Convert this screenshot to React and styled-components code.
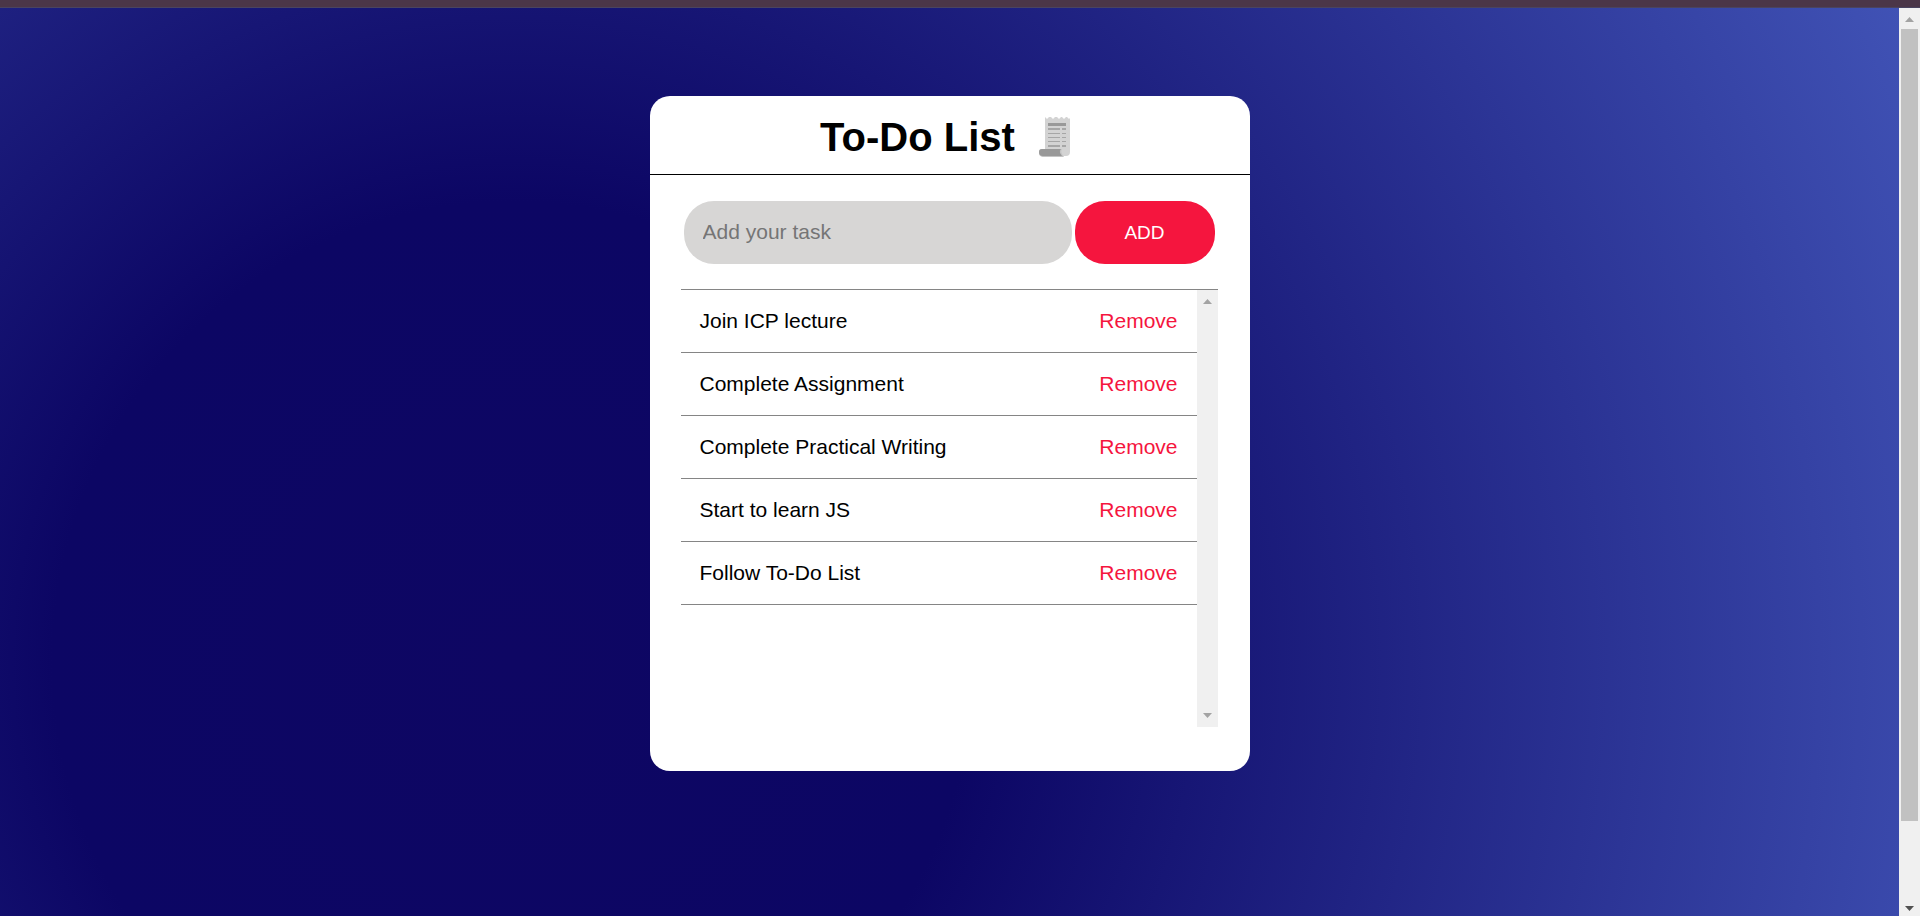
import React, { useState } from "react";
import styled, { createGlobalStyle } from "styled-components";

const GlobalStyle = createGlobalStyle`
  * { box-sizing: border-box; }
  body {
    margin: 0;
    font-family: Arial, "Liberation Sans", sans-serif;
  }
`;

const Window = styled.div`
  display: flex;
  flex-direction: column;
  height: 100vh;
  overflow: hidden;
`;

const TopStrip = styled.div`
  flex: none;
  height: 8px;
  background: #4b3648;
  border-bottom: 1px solid #4a4460;
`;

const Viewport = styled.div`
  flex: 1;
  display: flex;
  min-height: 0;
`;

const Page = styled.main`
  flex: 1;
  min-width: 0;
  display: flex;
  flex-direction: column;
  align-items: center;
  padding: 88px 20px 0;
  overflow: hidden;
  background: radial-gradient(circle at 27% 72%, #0e0663 0%, #0c0664 30%, #4052b5 100%);
`;

const Card = styled.section`
  width: 100%;
  max-width: 600px;
  padding-bottom: 44px;
  border-radius: 20px;
  background: #fff;
`;

const Header = styled.header`
  display: flex;
  justify-content: center;
  align-items: center;
  gap: 24px;
  height: 79px;
  padding: 4px 9px 0 0;
  border-bottom: 1px solid #000;
`;

const Title = styled.h1`
  margin: 0;
  font-size: 40px;
  line-height: 46px;
  font-weight: 700;
  color: #000;
`;

const ReceiptIcon = styled.svg`
  width: 31px;
  height: 40px;
`;

const Form = styled.form`
  display: flex;
  gap: 3px;
  padding: 26px 35px 25px 34px;
`;

const TaskInput = styled.input`
  flex: 1;
  min-width: 0;
  height: 63px;
  padding: 0 19px 2px;
  border: 0;
  border-radius: 30px;
  outline: none;
  background: #d7d6d5;
  font-family: inherit;
  font-size: 21px;
  color: #000;
  &::placeholder { color: #757575; opacity: 1; }
`;

const AddButton = styled.button`
  width: 140px;
  height: 63px;
  padding: 0;
  border: 0;
  border-radius: 30px;
  background: #f5153e;
  color: #fff;
  font-family: inherit;
  font-size: 19px;
  cursor: pointer;
`;

const ListPanel = styled.div`
  display: flex;
  height: 438px;
  margin: 0 32px 0 31px;
  border-top: 1px solid #858585;
`;

const TaskList = styled.ul`
  flex: 1;
  margin: 0;
  padding: 0;
  list-style: none;
`;

const TaskRow = styled.li`
  display: flex;
  justify-content: space-between;
  align-items: center;
  padding: 19px;
  border-bottom: 1px solid #858585;
  font-size: 21px;
  line-height: 24px;
  color: #000;
`;

const RemoveButton = styled.button`
  padding: 0;
  border: 0;
  background: none;
  color: #f5153e;
  font: inherit;
  cursor: pointer;
`;

const Track = styled.div`
  flex: none;
  display: flex;
  flex-direction: column;
  align-items: center;
  justify-content: space-between;
  width: 21px;
  padding: ${(p) => p.$pad};
  background: #f0f0f0;
`;

const Thumb = styled.div`
  flex: none;
  width: 17px;
  height: 88.6%;
  margin: 7px 0 auto;
  background: #c1c1c1;
`;

const Arrow = styled.svg`
  flex: none;
  width: 9px;
  height: 5px;
  fill: ${(p) => p.$color};
`;

const UpArrow = ({ color }) => (
  <Arrow $color={color} viewBox="0 0 9 5" aria-hidden="true">
    <path d="M4.5 0 9 5H0z" />
  </Arrow>
);

const DownArrow = ({ color }) => (
  <Arrow $color={color} viewBox="0 0 9 5" aria-hidden="true">
    <path d="M0 0h9L4.5 5z" />
  </Arrow>
);

const Receipt = () => (
  <ReceiptIcon viewBox="0 0 31 40" aria-hidden="true">
    <path
      d="M6 0l2 2 2-2h2l2 2 2-2h2l2 2 2-2h1l2 2 2-2h1l2 2 1-1v34a4 4 0 0 1-4 4H6z"
      fill="#d3d3d3"
    />
    <path d="M3 32h20a5 5 0 0 0 0 5l2 3H4a4 4 0 0 1-4-5 3 3 0 0 1 3-3z" fill="#c4c4c4" />
    <path d="M3 32h19a4 4 0 0 0-1 4l2 3H4a4 4 0 0 1-4-4 3 3 0 0 1 3-3z" fill="#999" />
    <path d="M9 6h18v3H9z" fill="#999" />
    <path
      d="M9 11h12v2H9zM23 11h4v2h-4zM9 16h12v1H9zM23 16h4v1h-4zM9 20h12v1H9zM23 20h4v1h-4zM9 24h12v1H9zM23 24h4v1h-4zM9 28h12v2H9zM23 28h4v2h-4z"
      fill="#a6a6a6"
    />
  </ReceiptIcon>
);

const initialTasks = [
  "Join ICP lecture",
  "Complete Assignment",
  "Complete Practical Writing",
  "Start to learn JS",
  "Follow To-Do List",
];

export default function App() {
  const [tasks, setTasks] = useState(initialTasks);
  const [draft, setDraft] = useState("");

  const addTask = (event) => {
    event.preventDefault();
    if (!draft.trim()) return;
    setTasks([...tasks, draft.trim()]);
    setDraft("");
  };

  return (
    <Window>
      <GlobalStyle />
      <TopStrip />
      <Viewport>
        <Page>
          <Card>
            <Header>
              <Title>To-Do List</Title>
              <Receipt />
            </Header>
            <Form onSubmit={addTask}>
              <TaskInput
                aria-label="Add your task"
                placeholder="Add your task"
                value={draft}
                onChange={(e) => setDraft(e.target.value)}
              />
              <AddButton type="submit">ADD</AddButton>
            </Form>
            <ListPanel>
              <TaskList>
                {tasks.map((task) => (
                  <TaskRow key={task}>
                    <span>{task}</span>
                    <RemoveButton
                      type="button"
                      onClick={() => setTasks(tasks.filter((t) => t !== task))}
                    >
                      Remove
                    </RemoveButton>
                  </TaskRow>
                ))}
              </TaskList>
              <Track $pad="9px 0">
                <UpArrow color="#a3a3a3" />
                <DownArrow color="#a3a3a3" />
              </Track>
            </ListPanel>
          </Card>
        </Page>
        <Track $pad="9px 0 5px">
          <UpArrow color="#a3a3a3" />
          <Thumb />
          <DownArrow color="#505050" />
        </Track>
      </Viewport>
    </Window>
  );
}
